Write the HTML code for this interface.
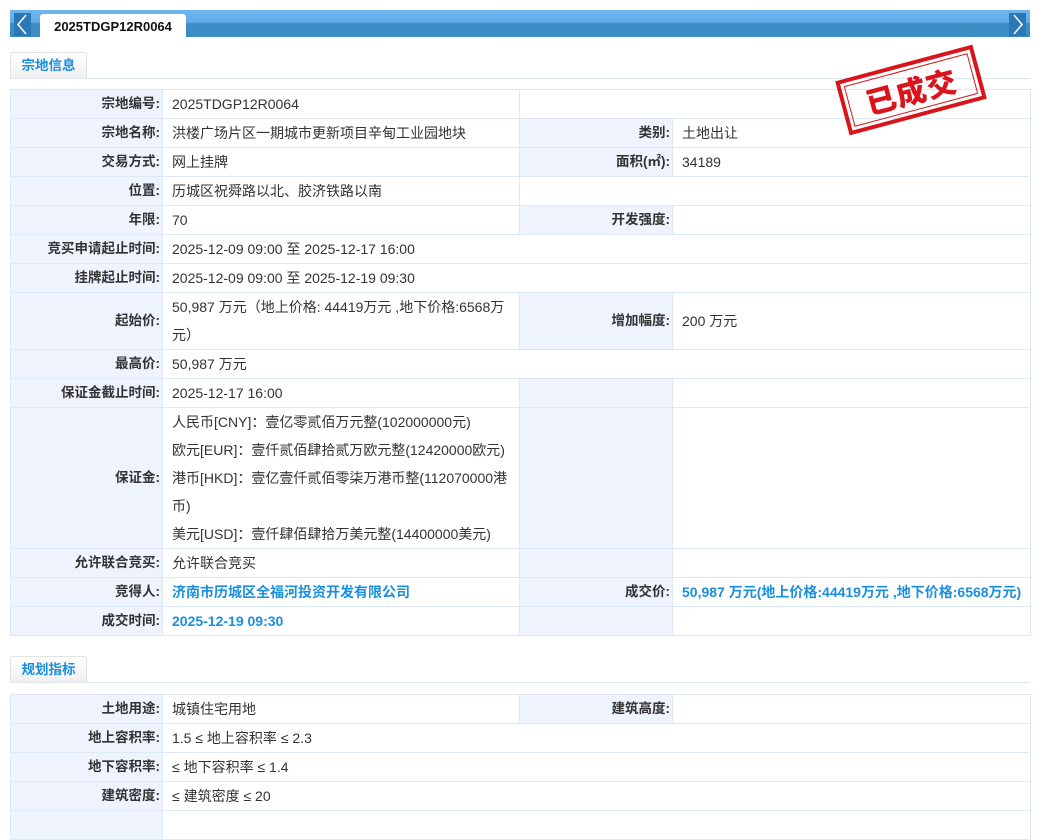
<!DOCTYPE html><html><head><meta charset="utf-8"><style>
body{margin:0;background:#fff;font-family:"Liberation Sans","Noto Sans CJK SC",sans-serif;font-size:14px;color:#333;position:relative;width:1038px;height:815px;overflow:hidden}
.bar{position:absolute;left:10px;top:10px;width:1020px;height:27px;background:linear-gradient(#6fb6f0 0,#62acea 45%,#3f8ec6 50%,#3c8cc4 100%)}
.arr{position:absolute;top:3px;width:17px;height:23px;background:#2a78b6}
.tab{position:absolute;left:40px;top:14px;width:146px;height:23px;background:#fff;border-radius:3px 3px 0 0;font-weight:bold;font-size:13px;line-height:26px;text-align:center;color:#111}
.sec{position:absolute;left:10px;width:1020px;height:26px;border-bottom:1px solid #dfe5ec}
.sec span{position:absolute;left:0;top:0;width:75px;height:25px;border:1px solid #e2e2e2;border-bottom:none;border-radius:3px 3px 0 0;background:linear-gradient(#fff,#f0f0f0);color:#1a8fe0;font-weight:bold;font-size:13.5px;line-height:25px;text-align:center}
table{position:absolute;left:10px;width:1021px;border-collapse:collapse;table-layout:fixed}
td{border:1px solid #dde8f6;height:28px;padding:0 9px 0 9px;line-height:28px;vertical-align:middle}
td.l{background:#eef3fd;text-align:right;padding:0 2px 0 0;font-weight:bold;color:#333;font-size:13.5px}
.b{color:#1a8fe0;font-weight:bold}
.stamp{position:absolute;left:840px;top:62px;width:134px;height:48px;border:4px solid #d9151b;transform:rotate(-15deg);color:#d9151b;font-size:30px;font-weight:900;line-height:48px;text-align:center;font-family:"Noto Sans CJK SC",sans-serif;letter-spacing:1px}
.stamp:after{content:"";position:absolute;left:3px;top:3px;right:3px;bottom:3px;border:1px solid #d9151b}
</style></head><body>
<div class="bar"><div class="arr" style="left:4px"><svg width="17" height="23"><path d="M12 2 L4 11.5 L12 21" stroke="#fff" stroke-width="1.5" fill="none"/></svg></div><div class="arr" style="right:4px"><svg width="17" height="23"><path d="M5 2 L13 11.5 L5 21" stroke="#fff" stroke-width="1.5" fill="none"/></svg></div></div>
<div class="tab">2025TDGP12R0064</div>
<div class="sec" style="top:52px"><span>宗地信息</span></div>
<table style="top:89px">
<colgroup><col style="width:152px"><col style="width:357px"><col style="width:153px"><col style="width:358px"></colgroup>
<tr><td class="l">宗地编号:</td><td>2025TDGP12R0064</td><td colspan="2"></td></tr>
<tr><td class="l">宗地名称:</td><td>洪楼广场片区一期城市更新项目辛甸工业园地块</td><td class="l">类别:</td><td>土地出让</td></tr>
<tr><td class="l">交易方式:</td><td>网上挂牌</td><td class="l">面积(㎡):</td><td>34189</td></tr>
<tr><td class="l">位置:</td><td>历城区祝舜路以北、胶济铁路以南</td><td colspan="2"></td></tr>
<tr><td class="l">年限:</td><td>70</td><td class="l">开发强度:</td><td></td></tr>
<tr><td class="l">竞买申请起止时间:</td><td colspan="3">2025-12-09 09:00 至 2025-12-17 16:00</td></tr>
<tr><td class="l">挂牌起止时间:</td><td colspan="3">2025-12-09 09:00 至 2025-12-19 09:30</td></tr>
<tr><td class="l" style="height:56px">起始价:</td><td>50,987 万元（地上价格: 44419万元 ,地下价格:6568万元）</td><td class="l">增加幅度:</td><td>200 万元</td></tr>
<tr><td class="l">最高价:</td><td colspan="3">50,987 万元</td></tr>
<tr><td class="l">保证金截止时间:</td><td>2025-12-17 16:00</td><td class="l"></td><td></td></tr>
<tr><td class="l" style="height:140px">保证金:</td><td>人民币[CNY]：壹亿零贰佰万元整(102000000元)<br>欧元[EUR]：壹仟贰佰肆拾贰万欧元整(12420000欧元)<br>港币[HKD]：壹亿壹仟贰佰零柒万港币整(112070000港币)<br>美元[USD]：壹仟肆佰肆拾万美元整(14400000美元)</td><td class="l"></td><td></td></tr>
<tr><td class="l">允许联合竞买:</td><td>允许联合竞买</td><td class="l"></td><td></td></tr>
<tr><td class="l">竞得人:</td><td class="b">济南市历城区全福河投资开发有限公司</td><td class="l">成交价:</td><td class="b" style="padding-right:0;white-space:nowrap">50,987 万元(地上价格:44419万元 ,地下价格:6568万元)</td></tr>
<tr><td class="l">成交时间:</td><td class="b">2025-12-19 09:30</td><td class="l"></td><td></td></tr>
</table>
<div class="sec" style="top:656px"><span>规划指标</span></div>
<table style="top:694px">
<colgroup><col style="width:152px"><col style="width:357px"><col style="width:153px"><col style="width:358px"></colgroup>
<tr><td class="l">土地用途:</td><td>城镇住宅用地</td><td class="l">建筑高度:</td><td></td></tr>
<tr><td class="l">地上容积率:</td><td colspan="3">1.5 ≤ 地上容积率 ≤ 2.3</td></tr>
<tr><td class="l">地下容积率:</td><td colspan="3">≤ 地下容积率 ≤ 1.4</td></tr>
<tr><td class="l">建筑密度:</td><td colspan="3">≤ 建筑密度 ≤ 20</td></tr>
<tr><td class="l"></td><td colspan="3"></td></tr>
</table>
<div class="stamp">已成交</div>
</body></html>
